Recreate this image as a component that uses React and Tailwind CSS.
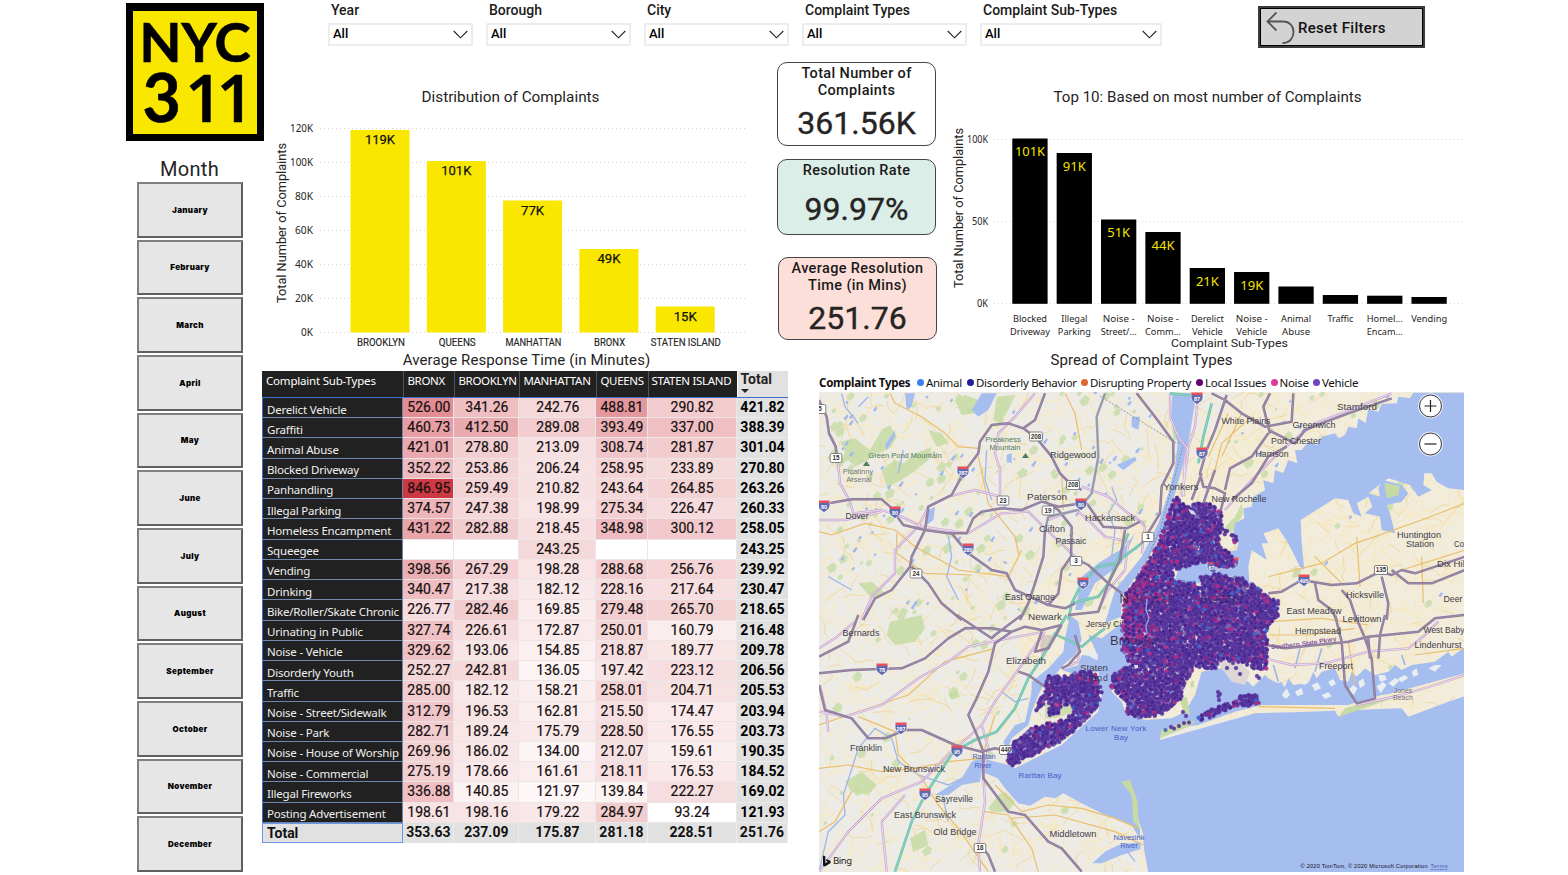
import React from "react";

const DIN = "Roboto, 'Liberation Sans', sans-serif";
const SEGOE = "'Noto Sans', 'Open Sans', sans-serif";

const MONTHS = ["January", "February", "March", "April", "May", "June", "July", "August", "September", "October", "November", "December"];

const FILTERS = [
  ["Year", "w-[145px]"],
  ["Borough", "w-[145px]"],
  ["City", "w-[145px]"],
  ["Complaint Types", "w-[165px]"],
  ["Complaint Sub-Types", "w-[182px]"],
];

const COLUMNS = ["BRONX", "BROOKLYN", "MANHATTAN", "QUEENS", "STATEN ISLAND"];
const ROWS = [
  ["Derelict Vehicle", "526.00", "341.26", "242.76", "488.81", "290.82", "421.82"],
  ["Graffiti", "460.73", "412.50", "289.08", "393.49", "337.00", "388.39"],
  ["Animal Abuse", "421.01", "278.80", "213.09", "308.74", "281.87", "301.04"],
  ["Blocked Driveway", "352.22", "253.86", "206.24", "258.95", "233.89", "270.80"],
  ["Panhandling", "846.95", "259.49", "210.82", "243.64", "264.85", "263.26"],
  ["Illegal Parking", "374.57", "247.38", "198.99", "275.34", "226.47", "260.33"],
  ["Homeless Encampment", "431.22", "282.88", "218.45", "348.98", "300.12", "258.05"],
  ["Squeegee", "", "", "243.25", "", "", "243.25"],
  ["Vending", "398.56", "267.29", "198.28", "288.68", "256.76", "239.92"],
  ["Drinking", "340.47", "217.38", "182.12", "228.16", "217.64", "230.47"],
  ["Bike/Roller/Skate Chronic", "226.77", "282.46", "169.85", "279.48", "265.70", "218.65"],
  ["Urinating in Public", "327.74", "226.61", "172.87", "250.01", "160.79", "216.48"],
  ["Noise - Vehicle", "329.62", "193.06", "154.85", "218.87", "189.77", "209.78"],
  ["Disorderly Youth", "252.27", "242.81", "136.05", "197.42", "223.12", "206.56"],
  ["Traffic", "285.00", "182.12", "158.21", "258.01", "204.71", "205.53"],
  ["Noise - Street/Sidewalk", "312.79", "196.53", "162.81", "215.50", "174.47", "203.94"],
  ["Noise - Park", "282.71", "189.24", "175.79", "228.50", "176.55", "203.73"],
  ["Noise - House of Worship", "269.96", "186.02", "134.00", "212.07", "159.61", "190.35"],
  ["Noise - Commercial", "275.19", "178.66", "161.61", "218.11", "176.53", "184.52"],
  ["Illegal Fireworks", "336.88", "140.85", "121.97", "139.84", "222.27", "169.02"],
  ["Posting Advertisement", "198.61", "198.16", "179.22", "284.97", "93.24", "121.93"],
];
const TOTALS = ["353.63", "237.09", "175.87", "281.18", "228.51", "251.76"];

function heat(v) {
  if (!v) return "#ffffff";
  const f = (parseFloat(v) - 93.24) / (846.95 - 93.24);
  const mix = (a, b) => Math.round(a + (b - a) * f);
  return `rgb(${mix(255, 204)},${mix(255, 57)},${mix(255, 68)})`;
}

function Logo() {
  return (
    <svg className="block h-[138px] w-[138px] shrink-0" viewBox="126 3 138 138">
      <rect x="126" y="3" width="138" height="138" fill="#000" />
      <rect x="133" y="11" width="124" height="123" fill="#f9e700" />
      <g fontFamily="Lato, sans-serif" fontWeight="700" fill="#000" stroke="#000" strokeWidth=".7">
        <text x="139.500" y="61.500" fontSize="54" textLength="111" lengthAdjust="spacingAndGlyphs">NYC</text>
        <text x="142.500" y="122" fontSize="66">3</text>
        <text x="185 216.500" y="122" fontSize="66" fontFamily="Open Sans, sans-serif" fontWeight="600">11</text>
      </g>
    </svg>
  );
}

function Sidebar() {
  return (
    <aside className="flex w-[136px] shrink-0 flex-col pt-[3px]">
      <Logo />
      <h2 className="mt-[15px] pl-[34px] font-[Roboto] text-[20px] leading-[26px] tracking-[0.3px] text-[#252423]">Month</h2>
      <div className="ml-[11px] grid h-[690px] w-[106px] grid-rows-12 gap-[2px]">
        {MONTHS.map((m) => (
          <button key={m} className="flex items-center justify-center border-2 border-[#606060] border-t-[#808080] border-l-[#808080] bg-[#e6e6e6] font-[Inter] text-[8px] leading-[10px] font-black tracking-[0.35px] text-black">
            {m}
          </button>
        ))}
      </div>
    </aside>
  );
}

function Header() {
  return (
    <header className="flex h-[60px] pl-[66px] font-[Roboto]">
      <div className="flex gap-[13px]">
        {FILTERS.map(([name, w]) => (
          <div key={name} className={w}>
            <div className="pl-[3px] text-[14px] leading-[20px] font-medium text-[#1b1a19]">{name}</div>
            <div className="mt-[3px] flex h-[23px] items-center justify-between border-2 border-[#ededed] pr-[3px] pl-[3px] text-[13px] text-black">
              <span className="pb-[2px] font-medium">All</span>
              <svg width="15" height="9" viewBox="0 0 15 9" fill="none" stroke="#222" strokeWidth="1.1"><path d="M.7 1 7.500 7.800 14.300 1" /></svg>
            </div>
          </div>
        ))}
      </div>
      <button className="mt-[6px] ml-[96px] flex h-[42px] w-[167px] items-center border-[3px] border-[#3c3c3c] bg-[#d3d3d3] pl-[4px] outline-[1px] -outline-offset-3 outline-black">
        <svg width="30" height="34" viewBox="0 0 30 34" fill="none" stroke="#555" strokeWidth="1.8"><path d="M11.500 2.500 2.500 11.500 11.500 20.500M2.500 11.500H18C25 11.500 28.500 16.500 28.500 22S25 33 17.500 33" /></svg>
        <span className="ml-[3px] pt-[2px] text-[15px] font-medium tracking-[0.3px] text-[#111]">Reset Filters</span>
      </button>
    </header>
  );
}

function T({ x, y, w, s = 11, a = "middle", fill = "#252423", f = SEGOE, b = 400, children, ...r }) {
  return (
    <text x={x} y={y} fontSize={s} textAnchor={a} fill={fill} fontFamily={f} fontWeight={b} textLength={w} lengthAdjust="spacingAndGlyphs" {...r}>
      {children}
    </text>
  );
}

function BoroughChart() {
  const bars = [["BROOKLYN", 130, "119K", 48, 30], ["QUEENS", 161, "101K", 37, 30], ["MANHATTAN", 200.500, "77K", 56, 23], ["BRONX", 249, "49K", 31, 23], ["STATEN ISLAND", 306.500, "15K", 70, 23]];
  return (
    <svg className="block h-[290px] w-[500px]" viewBox="262 60 500 290">
      <T x={510.500} y={102} w={178} s={15} f={DIN}>Distribution of Complaints</T>
      {[120, 100, 80, 60, 40, 20, 0].map((v, i) => (
        <g key={v}>
          <line x1="320" x2="746" y1={128.500 + i * 34} y2={128.500 + i * 34} stroke="#d4d4d4" strokeDasharray="1 3" />
          <T x={313} y={132.300 + i * 34} s={10.500} a="end" w={v >= 100 ? 23 : v ? 18 : 12}>{v}K</T>
        </g>
      ))}
      {bars.map(([n, top, l, w, lw], i) => (
        <g key={n}>
          <rect x={350.500 + i * 76.300} y={top} width="59" height={332.500 - top} fill="#f9e700" />
          <T x={380 + i * 76.300} y={top + 14} s={13.500} f={DIN} fill="#111" stroke="#111" strokeWidth=".25" w={lw}>{l}</T>
          <T x={381 + i * 76.200} y={346} s={10} f={DIN} stroke="#252423" strokeWidth=".15" w={w}>{n}</T>
        </g>
      ))}
      <T x={0} y={0} w={160} s={13} f={DIN} transform="translate(286 223) rotate(-90)">Total Number of Complaints</T>
    </svg>
  );
}

function TopTenChart() {
  const bars = [
    [138.500, "101K", 30, "Blocked", 34, "Driveway", 40], [153, "91K", 23, "Illegal", 26, "Parking", 33], [219.500, "51K", 23, "Noise -", 32, "Street/...", 36],
    [232, "44K", 23, "Noise -", 32, "Comm...", 36], [268, "21K", 23, "Derelict", 33, "Vehicle", 31], [272, "19K", 23, "Noise -", 32, "Vehicle", 31],
    [286.500, "", 0, "Animal", 30, "Abuse", 28], [295, "", 0, "Traffic", 26, "", 0], [295.700, "", 0, "Homel...", 36, "Encam...", 36], [297, "", 0, "Vending", 36, "", 0],
  ];
  return (
    <svg className="block h-[290px] w-[522px]" viewBox="946 60 522 290">
      <T x={1207.500} y={102} w={308} s={15} f={DIN}>Top 10: Based on most number of Complaints</T>
      {["100K", "50K", "0K"].map((v, i) => (
        <g key={v}>
          <line x1="994" x2="1464" y1={139.500 + i * 82} y2={139.500 + i * 82} stroke="#d4d4d4" strokeDasharray="1 3" />
          <T x={988} y={143.300 + i * 82} s={10} a="end" w={[21, 16, 11][i]}>{v}</T>
        </g>
      ))}
      {bars.map(([top, l, lw, a, aw, b, bw], i) => {
        const cx = 1030 + i * 44.350;
        return (
          <g key={i}>
            <rect x={cx - 17.700} y={top} width="35.300" height={303.800 - top} fill="#000" />
            {l && <T x={cx} y={top + 17.800} s={13} fill="#f5e400" w={lw}>{l}</T>}
            <T x={cx} y={322} s={9.600} w={aw}>{a}</T>
            {b && <T x={cx} y={335} s={9.600} w={bw}>{b}</T>}
          </g>
        );
      })}
      <T x={1229.500} y={347} w={117} s={11.500} f={DIN}>Complaint Sub-Types</T>
      <T x={0} y={0} w={160} s={13} f={DIN} transform="translate(963 208) rotate(-90)">Total Number of Complaints</T>
    </svg>
  );
}

function Kpi({ title, value, cls, vcls }) {
  return (
    <div className={"flex w-[159px] flex-col items-center rounded-[10px] border border-[#444] font-[Roboto] " + cls}>
      <div className="text-center text-[14.500px] leading-[17px] font-medium tracking-[0.35px] whitespace-pre-line text-[#1b1a19]">{title}</div>
      <div className={"text-[32px] leading-[38px] text-[#252423] [-webkit-text-stroke:0.4px_#252423] " + vcls}>{value}</div>
    </div>
  );
}

const GRID = "grid grid-cols-[141.400px_51px_65px_77px_51.200px_89px_51.800px]";

function Matrix() {
  return (
    <div className="w-[526.400px] font-[Roboto]">
      <div className={GRID + " h-[27px] border-b border-[#3d6fd0] bg-[#212121] text-white"}>
        <div className="pt-px pl-[4px] font-['Noto_Sans'] text-[11.500px] leading-[18px] tracking-[-0.2px]">Complaint Sub-Types</div>
        {COLUMNS.map((c) => (
          <div key={c} className="border-l border-[#4c5361] pt-px pl-[3px] font-['Noto_Sans'] text-[11.500px] leading-[18px] tracking-[-0.3px] whitespace-nowrap">{c}</div>
        ))}
        <div className="border-l border-white bg-[#e1e1e1] pl-[3px] text-[14px] leading-[17px] font-bold text-[#252423]">
          Total
          <svg className="mt-px block" width="8" height="4" viewBox="0 0 8 4"><path d="M0 0H8L4 4Z" fill="#222" /></svg>
        </div>
      </div>
      {ROWS.map((r) => (
        <div key={r[0]} className={GRID + " h-[20.240px]"}>
          <div className="overflow-hidden border-r border-b border-l border-[#6f87ad] border-l-[#3d6fd0] bg-[#212121] pl-[4px] pt-[2.500px] font-['Noto_Sans'] text-[11.500px] leading-[17px] tracking-[-0.2px] whitespace-nowrap text-[#f0f0f0]">{r[0]}</div>
          {r.slice(1, 6).map((v, i) => (
            <div key={i} className="border-r border-b border-[#ece4e5] pl-px text-center text-[14px] leading-[18px] text-[#161010] [-webkit-text-stroke:0.2px_#161010]" style={{ background: heat(v) }}>{v}</div>
          ))}
          <div className="border-b border-[#ececec] bg-[#e1e1e1] text-center text-[14px] leading-[18px] font-bold text-black">{r[6]}</div>
        </div>
      ))}
      <div className={GRID + " h-[20px] bg-[#e1e1e1] text-[14px] leading-[18px] font-bold text-[#111]"}>
        <div className="border border-[#6c97e6] pl-[4px]">Total</div>
        {TOTALS.map((v, i) => (
          <div key={i} className="border-r border-[#ececec] text-center">{v}</div>
        ))}
      </div>
    </div>
  );
}

function rng(seed) {
  let s = seed;
  return () => {
    s = (s * 1664525 + 1013904223) % 4294967296;
    return s / 4294967296;
  };
}

function inside(x, y, poly) {
  let hit = false;
  for (let i = 0, j = poly.length - 1; i < poly.length; j = i++) {
    const [xi, yi] = poly[i];
    const [xj, yj] = poly[j];
    if (yi > y !== yj > y && x < ((xj - xi) * (y - yi)) / (yj - yi) + xi) hit = !hit;
  }
  return hit;
}

const MAINLAND = [[1170, 503], [1178, 497], [1185, 507], [1202, 502], [1210, 503], [1222, 513], [1222, 527], [1218, 543], [1228, 552], [1236, 560], [1232, 567], [1218, 567], [1212, 561], [1198, 564], [1185, 567], [1175, 570], [1173, 581], [1192, 583], [1204, 588], [1200, 576], [1218, 573], [1232, 577], [1245, 578], [1248, 588], [1252, 583], [1268, 597], [1279, 600], [1278, 616], [1268, 625], [1267, 669], [1255, 669], [1240, 662], [1218, 660], [1217, 669], [1195, 667], [1184, 684], [1182, 698], [1172, 708], [1165, 713], [1152, 717], [1143, 719], [1126, 714], [1128, 703], [1111, 688], [1112, 675], [1130, 663], [1122, 653], [1123, 597], [1138, 577], [1155, 550], [1167, 520]];
const STATEN = [[1047, 676], [1068, 676], [1080, 671], [1095, 671], [1102, 692], [1098, 706], [1082, 724], [1062, 741], [1035, 754], [1012, 766], [1006, 760], [1015, 740], [1032, 728], [1045, 724], [1060, 720], [1074, 714], [1073, 706], [1060, 704], [1048, 700], [1036, 712], [1037, 702], [1045, 692]];
const ROCKAWAY = [[1197, 718], [1212, 709], [1228, 703], [1234, 702], [1242, 694], [1257, 695], [1259, 704], [1248, 706], [1235, 706], [1220, 713], [1202, 721]];
const RODMAN = [[1222, 527], [1228, 530], [1226, 535], [1221, 532]];
const CITY_ISLAND = [[1231, 533], [1236, 536], [1239, 546], [1235, 547]];
const PARK = [[1048, 702], [1062, 705], [1060, 714], [1049, 716]];

function makeDots() {
  const r = rng(77);
  const dots = [];
  for (const poly of [MAINLAND, STATEN, ROCKAWAY, RODMAN, CITY_ISLAND, PARK]) {
    for (let y = 495; y < 770; y += 2.2) {
      for (let x = 1002; x < 1282; x += 2.2) {
        const px = x + (r() - 0.5) * 3;
        const py = y + (r() - 0.5) * 3;
        const k = r();
        if (!inside(px, py, poly)) continue;
        if (r() < 0.05) continue;
        const edge = poly === MAINLAND ? (py < 600 ? 1182 - (py - 500) * 0.25 : py < 640 ? 1157 : 1135) - px : -1;
        const pink = edge > 0 && py < 668 ? Math.min(0.5, 0.22 + edge * 0.01) : 0.1;
        const c = k < pink ? (k < pink / 2 ? "#c3267f" : "#9c1f7a") : k < pink + 0.02 ? "#2f68cf" : k < pink + 0.05 ? "#7d70b4" : k < pink + 0.4 ? "#43208c" : "#512c96";
        dots.push([px.toFixed(1), py.toFixed(1), c]);
      }
    }
  }
  for (let i = dots.length - 1; i > 0; i--) {
    const j = Math.floor(r() * (i + 1));
    [dots[i], dots[j]] = [dots[j], dots[i]];
  }
  [[1218, 692], [1218.500, 696], [1219, 700], [1220, 694], [1183, 712], [1186, 716], [1189, 722.500], [1184, 723], [1179, 726], [1171, 727], [1174, 728.500], [1233, 663], [1236, 668], [1240, 674], [1227, 668], [1257, 676], [1259, 678]].forEach(([x, y]) => dots.push([x, y, "#54309a"]));
  dots.push([1165.500, 730, "#3f6fd0"]);
  return dots;
}
const DOTS = makeDots();

function makeStreets() {
  const r = rng(5);
  let fine = "";
  let mid = "";
  let green = "";
  let ponds = "";
  for (let i = 0; i < 3600; i++) {
    const x = 819 + r() * 645;
    const y = 392 + r() * 480;
    const a = r() * 6.280;
    let d = `M${x.toFixed(1)} ${y.toFixed(1)}`;
    const n = 2 + Math.floor(r() * 3);
    for (let k = 0; k < n; k++) d += `l${(Math.cos(a + (r() - 0.5) * 1.200) * 7).toFixed(1)} ${(Math.sin(a + (r() - 0.5) * 1.200) * 7).toFixed(1)}`;
    if (i % 7) fine += d;
    else mid += d;
  }
  for (let i = 0; i < 200; i++) {
    const x = 819 + r() * (i % 3 ? 330 : 640);
    const y = 392 + r() * (i % 2 ? 230 : 470);
    const s = 1.500 + r() * 4.500;
    green += `M${x.toFixed(1)} ${y.toFixed(1)}l${s} ${-s}l${s * 0.8} ${s * 0.5}l${-s * 0.3} ${s}l${-s} ${s * 0.4}Z`;
    if (i % 2) ponds += `M${(x + 14).toFixed(1)} ${(y - 8).toFixed(1)}l${s * 0.7} ${-s * 0.8}l1.500 1l${-s * 0.5} ${s * 0.9}Z`;
  }
  return { fine, mid, green, ponds };
}
const STREETS = makeStreets();

const Q = {
  A: "translate(815 370) scale(.33333)",
  B: "translate(1135 370) scale(.33333)",
  C: "translate(815 615) scale(.33333)",
  D: "translate(1135 615) scale(.33333)",
};

const GREENS = [
  ["A", "M75 215L120 205 145 225 165 240 200 180 225 165 245 200 225 235 190 250 150 275 120 290 100 270 70 290 90 245ZM200 300L240 270 265 280 300 250 330 240 350 230 340 270 290 310 250 335 215 350ZM420 90L450 75 490 90 480 130 440 135ZM545 80L600 75 580 120 555 160 535 150ZM340 180L380 190 400 220 365 230ZM130 640L170 635 210 670 170 685Z"],
  ["C", "M225 20L320 0 330 40 300 80 240 90 215 60ZM90 500L140 470 185 510 160 540 110 530ZM285 670L330 645 340 690 295 710ZM520 580L550 540 570 530 600 560 580 590 530 590ZM400 240L425 225 435 245 410 255Z"],
  ["B", "M110 140L125 135 130 200 115 215ZM270 470L300 440 320 400 325 430 290 490ZM480 590L500 600 490 620 470 625Z"],
];

const ROADS = {
  highway: [
    ["A", "M12 90L35 140 42 190 62 230 65 255M12 400L50 398 110 388 200 388 225 410 265 465 330 480 400 490 455 490 475 445 500 425 560 415 620 420 680 395 730 410 800 400M690 70L660 150 625 175 580 160 530 165 495 215 490 250 445 310 410 375 340 410 330 480 290 560 285 590 230 660 180 685 145 750M625 175L665 205 710 260 735 310 770 345 800 360M815 400L865 470 935 475 975 455M410 490L460 550 530 600 575 610 600 660 700 705 750 715 780 700M290 590L340 640 380 700 440 750M690 395L730 420 770 470 768 560 740 600 730 670 700 705M770 560L820 585 880 640 920 670M930 480L915 570 880 640 850 725 760 735M690 480L685 560 660 640 640 700 615 750"],
    ["A", "M870 70L845 140 850 260 830 370 790 420 700 440 690 480", "#9ba7b1"],
    ["B", "M5 70L60 140 115 215 115 280 80 350 75 430 20 520M230 70L270 90 320 130 390 170 470 155 475 70M275 75L240 180 215 240 195 310 205 350 240 355 270 370 255 430M400 180L480 220 510 180 560 160 640 130 770 85M405 70L385 110 405 190M400 190L350 260 285 295 270 360M455 230L400 260 350 340 290 390M225 340L205 400 240 300M200 310L170 390M400 670L440 665 500 630 590 645 665 640 735 605 770 615 800 600 840 610 990 560M740 620L760 700 755 750M770 600L820 640 890 640 990 600M540 640L550 690 590 720 605 750M620 660L645 690 665 750"],
    ["C", "M12 125L100 80 130 0M12 175L110 165 260 160 330 130 400 70 450 40 530 40 590 50 630 35 680 45 740 30M425 0L530 70 540 60 620 0M590 50L540 85 520 170 485 250 460 300 490 370 505 410M12 210L30 285 110 310 160 370 210 370 270 345 320 345 420 390 500 410 540 400 580 410M505 410L505 490 580 590 630 600 700 680 740 700 800 770M495 690L520 720 540 770M610 170L640 180 690 215M740 30L700 100 660 110 680 50M780 60L795 110 760 150 740 160"],
    ["D", "M395 90L450 100 640 80 700 65 850 50 900 10 990 0M600 0L620 80 630 210 665 265 720 250 710 130 690 70 660 0M750 0L735 60 730 130M700 70L705 130"],
  ],
  pink: [
    ["A", "M68 270L75 340 105 395 115 430 200 420 260 440 320 470 460 490 560 430 640 425 690 475 780 560M12 450L90 450 200 425M660 70L600 140 550 190 540 250 555 300 555 380 480 360 400 380 340 410 310 470 240 540 240 610 170 680 140 750M800 350L880 380 940 430 985 460M790 425L830 460 870 500 940 515 930 600 880 660 850 720M700 450L780 420"],
    ["B", "M105 70L105 140 130 200 160 240 140 380M190 70L180 170 150 260 145 380M770 70L620 130 540 160 440 240 350 330 270 420M0 440L30 470 20 550"],
    ["C", "M12 100L60 70 120 20M12 290L90 305 200 270 310 190 400 140 460 95 580 70 690 50M690 50L620 150 540 260 500 330 400 420 320 500 200 550 100 650 12 770M500 330L520 400 505 480 510 560 490 690 495 770M15 210L35 300 40 350M270 540L200 620 215 770M790 100L790 140 740 160"],
    ["D", "M390 130L470 150 570 145 700 110 820 100 870 60 910 20M665 270L800 240 900 210 990 180"],
  ],
  teal: [
    ["A", "M980 520L900 580 850 590 800 640 770 700 760 750M770 700L850 680 880 640 940 490"],
    ["B", "M105 70L190 78M230 100L205 200 190 280"],
    ["C", "M755 0L720 60 680 130 640 190 600 280 545 350 480 375 415 410 330 540 290 620 240 770M715 55L800 95 830 70 870 40"],
  ],
  orange: [
    ["A", "M225 70L240 100 320 140 390 190 430 230 490 235M12 485L50 495 150 460 240 480 300 530 430 600 580 620 620 540M490 260L520 400 600 500 612 555M750 70L780 130 800 240M740 310L745 420M245 490L245 550 330 610 470 615"],
    ["B", "M350 140L260 220 240 300M320 130L260 260M280 130L220 260M400 620L560 580 660 520 720 500 860 450 990 400M665 500L675 650M540 560L620 640M800 600L990 540M860 560L865 700"],
    ["C", "M12 330L100 300 280 240 390 140 540 100M130 305L240 350 250 420 320 490 370 570 430 640 520 770M12 460L100 450 200 470 300 460 400 440 500 430 540 300M12 650L60 620 110 530M510 590L580 600 650 700 670 770M540 510L620 590 700 570 800 580 900 610 970 640M590 610L720 600 900 650 985 690"],
    ["D", "M400 20L560 10 700 30M400 60L520 60 660 40M840 120L990 100M640 80L660 210M370 275L600 280"],
  ],
};

const PLACES = [
  [1357, 410, "Stamford", 40], [1246, 424, "White Plains", 49], [1314, 428, "Greenwich", 43], [1296, 444, "Port Chester", 50], [1272, 457, "Harrison", 33],
  [1181, 490, "Yonkers", 35], [1239, 502, "New Rochelle", 55], [1419, 538, "Huntington", 44], [1420, 547, "Station", 28], [1459, 547, "Co", 10],
  [1452, 567, "Dix Hill", 30], [1365, 598, "Hicksville", 38], [1453, 602, "Deer", 19], [1314, 614, "East Meadow", 55], [1362, 622, "Levittown", 39],
  [1318, 634, "Hempstead", 46], [1444, 633, "West Baby", 41], [1438, 648, "Lindenhurst", 47], [1336, 669, "Freeport", 34],
  [1073, 458, "Ridgewood", 46], [1047, 499.500, "Paterson", 40], [1052, 532, "Clifton", 26], [1110, 521, "Hackensack", 50], [1071, 544, "Passaic", 31],
  [857, 519, "Dover", 23], [1030, 599.500, "East Orange", 50], [1045, 619.500, "Newark", 34], [861, 636, "Bernards", 37], [1026, 664, "Elizabeth", 40],
  [866, 750.500, "Franklin", 32], [914, 772, "New Brunswick", 62], [954, 802, "Sayreville", 38], [925, 817.500, "East Brunswick", 62], [955, 834.500, "Old Bridge", 43],
  [1073, 836.500, "Middletown", 47], [1107, 627, "Jersey City", 42], [1094, 670.500, "Staten", 28],
];

const INTERSTATES = [[963, 472, "287"], [824, 506, "80"], [895, 512, "80"], [968, 549, "280"], [1081, 504, "80"], [1083, 583, "95"], [1197, 398, "87"], [1202, 453, "87"], [1304, 580, "495"], [1213, 567, "678"], [1233, 563, "95"], [882, 669, "78"], [901, 728, "287"], [957, 751, "95"], [925, 794, "95"]];
const ROUTES = [[820, 409, "5"], [836, 458, "15"], [1036, 436.500, "208"], [1073, 485, "208"], [1003, 500.500, "23"], [1048, 510.500, "19"], [1076, 561, "3"], [916, 573.500, "24"], [1148, 537, "1"], [1381, 570, "135"], [1006, 750, "440"], [980, 848, "18"]];

function Roads({ list, color, w, inner }) {
  return list.map(([q, d, c], i) => (
    <g key={i} transform={Q[q]} fill="none" strokeLinejoin="round">
      <path d={d} stroke={c || color} strokeWidth={w} />
      {inner && <path d={d} stroke={inner} strokeWidth={w * 0.35} />}
    </g>
  ));
}

function ComplaintMap() {
  return (
    <svg className="block h-[480px] w-[645px]" viewBox="819 392 645 480">
      <rect x="819" y="392" width="645" height="480" fill="#edebe6" />
      <path d="M1020 600L1170 480 1240 392 1464 392V720H1130L1020 650Z" fill="#f3ecd9" opacity=".7" />
      <path d={STREETS.fine} stroke="#f6e8bd" strokeWidth=".9" fill="none" />
      <path d={STREETS.mid} stroke="#f0d694" strokeWidth=".8" fill="none" />
      <path d={STREETS.green} fill="#cfdfb4" />
      {GREENS.map(([q, d]) => <path key={q} d={d} transform={Q[q]} fill="#c6dba3" opacity=".85" />)}
      <path d={STREETS.ponds} fill="#a0b8ee" />
      <g fill="#a6bdf0">
        <path transform={Q.B} d="M835 68L825 85 790 80 785 100 740 102 730 125 700 118 692 160 670 145 665 175 640 170 630 195 612 205 600 190 560 200 545 225 520 215 500 240 480 240 487 280 460 270 445 310 420 300 415 340 385 330 390 360 355 380 350 410 325 415 328 445 300 460 295 490 310 520 305 540 280 545 290 590 240 600 230 560 180 570 130 600 115 640 190 640 250 610 330 630 345 660 340 590 350 540 395 570 380 520 400 520 385 490 430 475 460 520 495 590 508 600 500 520 497 450 560 410 600 385 640 390 655 430 680 440 665 400 700 380 712 410 690 430 735 440 740 480 780 490 765 430 755 405 800 395 820 370 800 345 745 330 730 355 735 380 700 370 760 325 825 345 850 380 890 360 865 345 868 310 890 310 905 335 940 355 990 360V68Z" />
        <path transform={Q.B} d="M112 70L185 70 178 110 170 160 158 230 140 300 120 370 95 450 60 530 10 610 -40 680 -42 740 -90 760 -60 660 20 560 70 460 100 370 120 290 128 220 108 150Z" />
        <path transform={Q.C} d="M820 60L860 70 925 20 935 115 945 150 890 190 890 230 920 260 935 300 990 315 1070 310 1110 290 1140 240 1160 170 1220 160 1300 200 1330 230 1400 200 1430 270 1360 265 1260 290 1150 330 1040 345 1035 375 1320 295 1480 290 1760 280 1780 305 1900 260 1960 240V775H1000L985 690 950 630 860 595 800 565 745 535 720 550 690 545 645 572 610 565 570 520 548 490 500 470 495 500 440 510 400 540 360 540 440 490 470 440 500 430 580 450 600 460 660 430 740 390 800 335 850 290 860 240 850 170 770 175 740 165 790 150 800 120 850 125Z" />
        <path transform={Q.C} d="M765 0L790 20 800 75 780 120 745 150 720 180 690 200 670 240 650 290 640 330 590 370 575 410 565 380 600 330 630 320 650 230 650 200 700 160 745 110 750 70Z" />
        <path transform={Q.D} d="M390 180L400 190 450 215 460 190 475 210 520 205 535 170 545 190 560 170 600 160 615 195 640 200 650 170 665 185 690 160 720 180 760 170 780 150 800 165 830 150 900 140 940 110 950 125 990 95V175L840 230 740 240 640 270 600 270 470 270 380 270 350 220Z" />
        <path transform={Q.C} d="M832 745L870 710 910 690 980 680 985 700 920 720 860 745Z" />
        <path transform={Q.A} d="M470 120L500 70 545 70 520 120 490 140ZM340 420L360 410 355 450 335 465ZM270 70L300 70 290 110 275 120ZM210 225L240 180 240 200 215 240ZM575 255L590 250 590 280 575 275ZM905 285L960 260 965 270 925 300ZM950 140L975 140 970 180 950 170ZM800 620L850 580 930 530 960 490 920 580 840 640 800 720 780 720Z" />
      </g>
      <g fill="none" stroke="#9fb7ea" strokeWidth="1.300">
        <path transform={Q.A} strokeWidth="4" d="M80 70L90 110 130 160M515 240L510 330 530 390M400 500L410 560 395 620 430 690M890 560L900 480 880 430 905 390 890 350M130 110L160 80M265 240L250 310M40 620L110 660" />
        <path transform={Q.C} strokeWidth="4" d="M12 770L40 650 90 600 85 540 130 400 180 340 230 370 250 440 310 480 400 510 440 490M560 230L600 260 640 250M380 530L400 620M930 700L960 740" />
        <path transform={Q.D} strokeWidth="5" d="M495 100L480 160M560 100L540 170M800 120L810 150M415 150L430 200" />
      </g>
      <g transform={Q.B} fill="#c6dba3"><path d="M748 338L795 348 790 375 755 385Z" /></g>
      <path transform={Q.D} fill="#e9eef0" d="M640 225l15-15 12 10-10 20zM670 200l15-10 5 20-15 10zM730 180l20 0 5 15-20 5zM725 215l18-15 12 10-18 25zM760 205l20-15 15 5-20 20zM790 190l20-10 10 10-22 12zM830 170l15-10 5 20-15 5zM440 240l15-20 10 20-12 12zM480 230l20-12 5 20-18 5zM530 210l18-8 10 18-18 8zM580 200l15-8 8 15-15 8zM880 160l20-10 20 0-20 20zM560 240l20-8 10 12-20 8zM500 200l12-6 5 12-12 4z" />
      <path transform={Q.D} fill="#f4ead0" d="M350 285L420 272 600 275 480 292 400 290ZM600 290L640 270 990 175 990 190 660 285 612 305Z" />
      <path transform={Q.D} fill="#c6dba3" d="M75 370L80 345 160 315 180 320 160 335ZM610 305L630 280 740 250 830 230 700 275ZM135 250L155 245 165 300 145 290ZM165 205L175 195 178 215 168 218Z" />
      <path transform={Q.D} fill="#dcd6d4" d="M245 140L300 130 345 170 330 210 290 200Z" />
      <path transform={Q.C} fill="#c6dba3" d="M918 500L945 495 968 560 970 620 985 650 955 620 950 540Z" />
      <path transform={Q.C} fill="#f4ead0" d="M950 540L965 600 985 660 988 770 978 770 975 640Z" />
      <path transform={Q.C} fill="#d9cbc2" d="M680 60L715 60 705 100 680 130 675 90Z" />
      <path transform={Q.C} fill="#e9edf0" d="M800 105L830 110 850 130 845 135 820 122ZM810 95L850 120 845 125Z" />
      <path transform={Q.C} fill="#cdddb0" d="M690 270L740 240 790 265 780 290 720 310 690 310Z" />
      <path d="M1100 396L1176 443H1184L1160 530 1140 575" stroke="#777" strokeWidth=".7" strokeDasharray="2 1.500" fill="none" />
      <Roads list={ROADS.orange} color="#e9bf6c" w={3.600} />
      <Roads list={ROADS.pink} color="#c6a3cf" w={7} inner="#f5ecf6" />
      <Roads list={ROADS.teal} color="#6fbfae" w={8} inner="#8fd8c6" />
      <Roads list={ROADS.highway} color="#8c7a9b" w={7.500} inner="#9d8dab" />
      <path d="M863 466l3.500-5 3.500 5zM1022 458l3.500-5 3.500 5z" fill="#4f7f52" />
      {INTERSTATES.map(([x, y, n], i) => (
        <g key={i} transform={`translate(${x} ${y})`}>
          <path d="M-5.500-4.500H5.500Q7 1 4 3.500L0 6.500-4 3.500Q-7 1-5.500-4.500Z" fill="#6169b0" stroke="#fff" strokeWidth=".6" />
          <path d="M-5.500-5.500H5.500V-3H-5.500Z" fill="#e8505b" />
          <text y="2.800" fontSize="5.500" fontWeight="700" fill="#fff" textAnchor="middle" fontFamily="Liberation Sans, sans-serif">{n}</text>
        </g>
      ))}
      {ROUTES.map(([x, y, n], i) => {
        const h = n.length === 3 ? 6.500 : 5.800;
        return (
          <g key={i} transform={`translate(${x} ${y})`}>
            <rect x={-h} y="-4.500" width={h * 2} height="9" rx="1.500" fill="#fff" stroke="#666" strokeWidth=".8" />
            <text y="2.300" fontSize="6.300" fontWeight="700" fill="#333" textAnchor="middle" fontFamily="Liberation Sans, sans-serif">{n}</text>
          </g>
        );
      })}
      <g fontFamily="Liberation Sans, sans-serif" textAnchor="middle" fill="#40404a">
        {PLACES.map(([x, y, n, w]) => (
          <text key={n} x={x} y={y} fontSize="8.800" textLength={w} lengthAdjust="spacingAndGlyphs">{n}</text>
        ))}
        <g fill="#4e7d5b" fontSize="7.500">
          <text x="1003" y="442">Preakness</text>
          <text x="1005" y="450">Mountain</text>
          <text x="905" y="458">Green Pond Mountain</text>
        </g>
        <g fill="#77777d" fontSize="7.500">
          <text x="858" y="474">Picatinny</text>
          <text x="859" y="482">Arsenal</text>
          <text x="1403" y="692.500" fontSize="7">Jones</text>
          <text x="1403" y="700" fontSize="7">Beach</text>
        </g>
        <g fill="#4560c4" fontSize="8">
          <text x="1116" y="730.500" textLength="61">Lower New York</text>
          <text x="1121" y="740">Bay</text>
          <text x="1040" y="777.500" textLength="43">Raritan Bay</text>
          <text x="984" y="759" fontSize="7.200">Raritan</text>
          <text x="983" y="768" fontSize="7.200">River</text>
          <text x="1129" y="839.500" fontSize="7.500">Navesink</text>
          <text x="1129" y="848" fontSize="7.500">River</text>
          <text x="1188" y="585" fontSize="7.200">East</text>
        </g>
        <path id="parkway" d="M1272 649Q1300 647 1336 641" fill="none" />
        <text fontSize="6.600" fontWeight="700" fill="#8a5aa6"><textPath href="#parkway" startOffset="50%">Southern State Pkwy</textPath></text>
      </g>
      <g stroke="#6a4fb0" strokeWidth=".35" fillOpacity=".9">
        {DOTS.map(([x, y, c], i) => <circle key={i} cx={x} cy={y} r="1.950" fill={c} />)}
      </g>
      <g fontFamily="Liberation Sans, sans-serif" fill="#23202e">
        <text x="1119.500" y="603" fontSize="13" fillOpacity=".3"><tspan fillOpacity=".8">N</tspan>ew York</text>
        <text x="1110" y="645" fontSize="13" fillOpacity=".3"><tspan fillOpacity=".85">Br</tspan><tspan fillOpacity=".55">o</tspan>oklyn</text>
        <text x="1200" y="603" fontSize="10" fillOpacity=".35">QUEENS</text>
        <text x="1080" y="681" fontSize="8.800" textLength="28" fillOpacity=".35">Isl<tspan fillOpacity=".8">and</tspan></text>
      </g>
      <path d="M1147 599L1146 610 1149 618 1146 626 1147 634" stroke="#8ea6e0" strokeWidth="1.400" fill="none" />
      <path d="M1188 509l6 2 2 4-5-1zM1134 665l4 0 0 3-3 1zM1143 632l3 1-1 3zM1195 635l3 2-2 4z" fill="#d5dbe6" />
      {[406, 444].map((y, i) => (
        <g key={y}>
          <circle cx="1430.500" cy={y} r="11.500" fill="#fff" stroke="#fff" strokeWidth="2" opacity=".7" />
          <circle cx="1430.500" cy={y} r="11" fill="#fff" stroke="#333" strokeWidth="1" />
          <path d={`M1424.500 ${y}h12` + (i ? "" : `M1430.500 ${y - 6}v12`)} stroke="#222" strokeWidth="1.200" />
        </g>
      ))}
      <path d="M823 855.500l2.300.8v7l2.600-1.500-1.400-.7-.9-2.200 5 1.900v2.300l-5.700 3.400-1.900-1.100z" fill="#111" />
      <text x="833" y="864" fontSize="9.500" fontFamily={SEGOE} fill="#222" textLength="19">Bing</text>
      <text x="1300.500" y="868" fontSize="5.600" fontFamily="Liberation Sans, sans-serif" fill="#111" textLength="127">© 2020 TomTom, © 2020 Microsoft Corporation</text>
      <text x="1430.500" y="868" fontSize="5.600" fontFamily="Liberation Sans, sans-serif" fill="#4857a5" textDecoration="underline" textLength="17">Terms</text>
    </svg>
  );
}

const LEGEND = [["Animal", "#3a80f5", "w-[50px]"], ["Disorderly Behavior", "#20209c", "w-[114px]"], ["Disrupting Property", "#e0642f", "w-[115px]"], ["Local Issues", "#620076", "w-[74.500px]"], ["Noise", "#dc3a9a", "w-[42.500px]"], ["Vehicle", "#7243c0", "w-[50px]"]];

function Legend() {
  return (
    <div className="flex h-[22px] items-center pt-[3px] font-['Noto_Sans'] text-[11.500px] leading-[16px] whitespace-nowrap text-[#111]">
      <span className="w-[98px] font-bold tracking-[-0.25px]">Complaint Types</span>
      {LEGEND.map(([n, c, w]) => (
        <span key={n} className={"flex items-center " + w}>
          <svg className="mr-[2px] shrink-0" width="7" height="8"><circle cx="3.500" cy="3.500" r="3.500" fill={c} /></svg>
          <span className="tracking-[-0.3px]">{n}</span>
        </span>
      ))}
    </div>
  );
}

export default function App() {
  return (
    <div className="flex h-[875px] w-[1568px] overflow-hidden bg-white pl-[126px]">
      <Sidebar />
      <main className="flex w-[1206px] shrink-0 flex-col">
        <Header />
        <section className="flex h-[290px]">
          <BoroughChart />
          <div className="ml-[15px] w-[169px] shrink-0 pt-[2px]">
            <Kpi title={"Total Number of\nComplaints"} value="361.56K" cls="h-[84px] pt-[2px]" vcls="mt-[5px]" />
            <Kpi title="Resolution Rate" value="99.97%" cls="mt-[13px] h-[76px] bg-[#dceee8] pt-[2px]" vcls="mt-[11px]" />
            <Kpi title={"Average Resolution\nTime (in Mins)"} value="251.76" cls="ml-px mt-[22px] h-[83px] bg-[#fddfd9] pt-[2px]" vcls="mt-[5px]" />
          </div>
          <TopTenChart />
        </section>
        <section className="flex">
          <div className="w-[527px]">
            <h2 className="h-[21px] pl-[2px] text-center font-[Roboto] text-[15px] leading-[20px] tracking-[0.1px] text-[#252423]">Average Response Time (in Minutes)</h2>
            <Matrix />
          </div>
          <div className="ml-[30px] w-[645px]">
            <h2 className="h-[20px] text-center font-[Roboto] text-[15px] leading-[20px] tracking-[0.1px] text-[#252423]">Spread of Complaint Types</h2>
            <Legend />
            <ComplaintMap />
          </div>
        </section>
      </main>
    </div>
  );
}
